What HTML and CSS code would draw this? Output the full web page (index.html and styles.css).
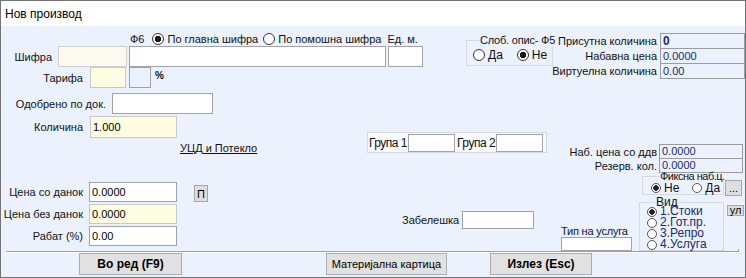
FILE: index.html
```html
<!DOCTYPE html>
<html lang="mk">
<head>
    <meta charset="UTF-8">
    <meta name="viewport" content="width=device-width, initial-scale=1.0">
    <title>Нов производ</title>
    <link rel="stylesheet" href="styles.css">
</head>
<body>
    <div class="window">
        <div class="titlebar">Нов производ</div>

        <div class="client">
            <div class="form">
                <div class="main">
                    <div class="top">
                        <div class="code-block">
                            <div class="search-row">
                                <span class="hotkey">Ф6</span>
                                <label class="opt"><input type="radio" name="search" class="radio" checked>По главна шифра</label>
                                <label class="opt"><input type="radio" name="search" class="radio">По помошна шифра</label>
                                <span class="unit-label">Ед. м.</span>
                            </div>
                            <div class="row">
                                <label class="lbl lbl-code">Шифра</label>
                                <input type="text" class="field code">
                                <input type="text" class="field name">
                                <input type="text" class="field unit">
                            </div>
                            <div class="row">
                                <label class="lbl lbl-tariff">Тарифа</label>
                                <input type="text" class="field yellow tariff">
                                <input type="text" class="field tariff-rate" disabled>
                                <span class="percent">%</span>
                            </div>
                        </div>

                        <fieldset class="group free-desc">
                            <legend>Слоб. опис- Ф5</legend>
                            <div class="opts">
                                <label class="opt"><input type="radio" name="free" class="radio">Да</label>
                                <label class="opt big"><input type="radio" name="free" class="radio" checked>Не</label>
                            </div>
                        </fieldset>
                    </div>

                    <div class="middle">
                        <div class="details">
                            <div class="row">
                                <label class="lbl lbl-approved">Одобрено по док.</label>
                                <input type="text" class="field approved">
                            </div>
                            <div class="row row-qty">
                                <label class="lbl lbl-qty">Количина</label>
                                <input type="text" class="field yellow qty" value="1.000">
                            </div>
                            <a href="#" class="trace-link">УЦД и Потекло</a>
                        </div>

                        <div class="groups">
                            <span>Група 1</span>
                            <input type="text" class="field group-input">
                            <span class="group2-label">Група 2</span>
                            <input type="text" class="field group-input second">
                        </div>
                    </div>

                    <div class="bottom">
                        <div class="prices">
                            <div class="row">
                                <label class="lbl lbl-price">Цена со данок</label>
                                <input type="text" class="field price" value="0.0000">
                            </div>
                            <div class="row">
                                <label class="lbl lbl-price">Цена без данок</label>
                                <input type="text" class="field yellow price" value="0.0000">
                            </div>
                            <div class="row">
                                <label class="lbl lbl-price">Рабат (%)</label>
                                <input type="text" class="field price" value="0.00">
                            </div>
                        </div>

                        <button class="mini-btn p-btn">П</button>

                        <div class="note">
                            <label>Забелешка</label>
                            <input type="text" class="field note-input">
                        </div>
                    </div>
                </div>

                <div class="side">
                    <div class="stock">
                        <div class="info-row">
                            <span>Присутна количина</span>
                            <div class="value strong">0</div>
                        </div>
                        <div class="info-row">
                            <span>Набавна цена</span>
                            <div class="value">0.0000</div>
                        </div>
                        <div class="info-row">
                            <span>Виртуелна количина</span>
                            <div class="value">0.00</div>
                        </div>
                    </div>

                    <div class="stock cost">
                        <div class="info-row">
                            <span>Наб. цена со ддв</span>
                            <div class="value">0.0000</div>
                        </div>
                        <div class="info-row">
                            <span>Резерв. кол.</span>
                            <div class="value">0.0000</div>
                        </div>
                    </div>

                    <div class="fixed-row">
                        <fieldset class="group fixed">
                            <legend>Фиксна наб.ц.</legend>
                            <div class="opts">
                                <label class="opt"><input type="radio" name="fixed" class="radio small" checked>Не</label>
                                <label class="opt"><input type="radio" name="fixed" class="radio small">Да</label>
                            </div>
                        </fieldset>
                        <button class="mini-btn dots">...</button>
                    </div>

                    <div class="kind-row">
                        <div class="service">
                            <label>Тип на услуга</label>
                            <input type="text" class="field service-input">
                        </div>
                        <fieldset class="group kind">
                            <legend>Вид</legend>
                            <div class="kind-list">
                                <label class="opt"><input type="radio" name="kind" class="radio small" checked>1.Стоки</label>
                                <label class="opt"><input type="radio" name="kind" class="radio small">2.Гот.пр.</label>
                                <label class="opt"><input type="radio" name="kind" class="radio small">3.Репро</label>
                                <label class="opt"><input type="radio" name="kind" class="radio small">4.Услуга</label>
                            </div>
                        </fieldset>
                        <button class="mini-btn ul-btn">ул</button>
                    </div>
                </div>
            </div>

            <div class="separator"></div>

            <div class="actions">
                <button class="btn btn-ok">Во ред (F9)</button>
                <button class="btn btn-card">Материјална картица</button>
                <button class="btn btn-exit">Излез (Esc)</button>
            </div>
        </div>
    </div>
</body>
</html>
```

FILE: styles.css
```css
* {
    box-sizing: border-box;
}

body {
    margin: 0;
    font-family: "Liberation Sans", Arial, sans-serif;
    font-size: 11px;
    color: #111;
    background: #fff;
}

.window {
    width: 746px;
    height: 278px;
    border: 1px solid #747474;
    display: flex;
    flex-direction: column;
}

.titlebar {
    height: 25px;
    line-height: 26px;
    padding-left: 4px;
    font-size: 12px;
    color: #000;
    background: #fff;
}

.client {
    flex: 1;
    display: flex;
    flex-direction: column;
    background: #ebf2fd;
}

.form {
    display: flex;
    height: 224px;
}

.main {
    flex: none;
    width: 556px;
    display: flex;
    flex-direction: column;
}

.side {
    flex: 1;
    min-width: 0;
    display: flex;
    flex-direction: column;
    padding-top: 7px;
}

/* rows, labels, inputs */

.row {
    display: flex;
    align-items: center;
    height: 21px;
}

.lbl {
    flex: none;
    text-align: right;
    white-space: nowrap;
}

.lbl-code { width: 51px; margin-right: 6px; }
.lbl-tariff { width: 82px; margin-right: 7px; }
.lbl-approved { width: 105px; margin-right: 6px; }
.lbl-qty { width: 82px; margin-right: 7px; }
.lbl-price { width: 82px; margin-right: 6px; }

.field {
    flex: none;
    height: 100%;
    margin: 0;
    padding: 0 2px;
    border: 1px solid #a3a3a3;
    background: #fff;
    font: inherit;
    color: #000;
    outline: none;
}

.field.yellow {
    background: #fffde1;
    border-color: #c9c9c9;
}

.field:disabled {
    background: #ebf2fd;
}

/* top block */

.top {
    display: flex;
    height: 62px;
}

.code-block {
    flex: none;
    width: 423px;
    padding-top: 6px;
}

.search-row {
    display: flex;
    align-items: center;
    height: 14px;
    padding-left: 129px;
    white-space: nowrap;
}

.hotkey {
    margin-right: 8px;
}

.opt {
    display: inline-flex;
    align-items: center;
    margin-right: 5px;
    white-space: nowrap;
}

.unit-label {
    margin-left: 1px;
}

.code {
    width: 69px;
    background: #fdf9ee;
    border-color: #cfcfcf;
}

.name { width: 257px; margin-left: 2px; }
.unit { width: 35px; margin-left: 2px; }
.tariff { width: 36px; }
.tariff-rate { width: 22px; margin-left: 3px; }

.percent {
    margin-left: 4px;
    font-size: 10px;
    font-weight: bold;
    margin-bottom: 4px;
}

/* radios */

.radio {
    -webkit-appearance: none;
    appearance: none;
    flex: none;
    width: 12px;
    height: 12px;
    margin: 0 3px 0 0;
    border: 1px solid #333;
    border-radius: 50%;
    background: #fff;
}

.radio:checked {
    background: radial-gradient(circle, #1a1a1a 0 3px, #fff 3.5px);
}

.radio.small {
    width: 10px;
    height: 10px;
    border-color: #555;
}

.radio.small:checked {
    background: radial-gradient(circle, #222 0 2.5px, #fff 3px);
}

/* group boxes */

.group {
    flex: none;
    margin: 0;
    padding: 0;
    min-width: 0;
    border: 1px solid #d5d9df;
}

.group legend {
    padding: 0 1px;
    line-height: 12px;
    white-space: nowrap;
}

.opts {
    display: flex;
    align-items: center;
}

.free-desc {
    align-self: flex-start;
    width: 87px;
    margin: 8px 0 0 42px;
    padding: 3px 0 4px 6px;
}

.free-desc legend {
    margin-left: 6px;
    font-size: 11px;
    letter-spacing: -0.2px;
}

.free-desc .opts {
    height: 12px;
    font-size: 12px;
}

.free-desc .opt {
    margin-right: 14px;
}

/* middle block */

.middle {
    display: flex;
    height: 72px;
}

.details {
    flex: none;
    width: 262px;
    padding-top: 5px;
}

.approved { width: 101px; }

.row-qty {
    height: 22px;
    margin-top: 2px;
}

.qty { width: 87px; }

.trace-link {
    display: block;
    margin: 4px 0 0 179px;
    line-height: 13px;
    color: #111;
    text-decoration: underline;
}

.groups {
    align-self: flex-start;
    display: flex;
    align-items: center;
    width: 180px;
    height: 21px;
    margin: 44px 0 0 104px;
    padding-left: 1px;
    background: #f8fafe;
    border: 1px solid #d3d8e0;
    font-size: 12px;
    letter-spacing: -0.5px;
    white-space: nowrap;
}

.group-input {
    width: 47px;
    height: 18px;
    margin-left: 1px;
}

.group2-label {
    margin-left: 2px;
}

/* bottom block */

.bottom {
    display: flex;
    flex: 1;
}

.prices {
    flex: none;
    display: flex;
    flex-direction: column;
    gap: 2px;
    padding-top: 22px;
}

.prices .row {
    height: 20px;
}

.price { width: 88px; }

.mini-btn {
    flex: none;
    padding: 0;
    border: 1px solid #a6a6a6;
    background: #dedede;
    font: inherit;
    color: #000;
}

.p-btn {
    align-self: flex-start;
    width: 14px;
    height: 17px;
    margin: 25px 0 0 17px;
}

.note {
    align-self: flex-start;
    display: flex;
    align-items: center;
    height: 18px;
    margin: 51px 0 0 194px;
}

.note-input {
    width: 72px;
    margin-left: 3px;
}

/* side column */

.info-row {
    display: flex;
    justify-content: flex-end;
    align-items: center;
    height: 16px;
    white-space: nowrap;
}

.info-row + .info-row {
    margin-top: -1px;
}

.value {
    flex: none;
    width: 85px;
    height: 100%;
    margin-left: 3px;
    padding-left: 2px;
    border: 1px solid #9c9c9c;
    line-height: 14px;
    color: #1b2a72;
    text-align: left;
}

.value.strong {
    font-weight: bold;
    font-size: 12px;
}

.cost {
    margin: 65px 2px 0 0;
}

.cost .info-row {
    height: 15px;
}

.cost .value {
    width: 84px;
    margin-left: 2px;
    line-height: 13px;
}

.fixed-row {
    display: flex;
    align-items: flex-start;
    margin-top: -3px;
    padding-left: 85px;
}

.fixed {
    width: 82px;
    padding: 0 0 1px 8px;
}

.fixed legend {
    margin-left: 8px;
    letter-spacing: -0.5px;
}

.fixed .opts {
    height: 11px;
    font-size: 12px;
}

.fixed .opt {
    margin-right: 13px;
}

.dots {
    width: 17px;
    height: 16px;
    margin: 10px 0 0 1px;
    line-height: 10px;
}

.kind-row {
    display: flex;
    align-items: flex-start;
}

.service {
    flex: none;
    display: flex;
    flex-direction: column;
    width: 72px;
    margin-left: 4px;
    padding-top: 30px;
    letter-spacing: -0.2px;
    color: #0c1540;
}

.service label {
    line-height: 11px;
    white-space: nowrap;
}

.service-input {
    height: 14px;
    width: 71px;
}

.kind {
    width: 85px;
    margin-left: 6px;
    padding: 0 0 0 7px;
}

.kind legend {
    margin-left: 8px;
    font-size: 12px;
}

.kind-list {
    display: flex;
    flex-direction: column;
    margin-top: -2px;
    font-size: 12px;
    line-height: 11px;
    color: #1b2a72;
}

.kind-list .opt {
    height: 11px;
}

.ul-btn {
    width: 17px;
    height: 11px;
    margin: 9px 0 0 3px;
    line-height: 9px;
}

/* bottom bar */

.separator {
    height: 3px;
    margin: -1px 6px 0 5px;
    border-bottom: 1px solid #a0a0a0;
    border-right: 1px solid #a0a0a0;
    box-shadow: 0 1px 0 #fff;
}

.actions {
    display: flex;
    padding: 1px 0 0 78px;
}

.btn {
    height: 22px;
    padding: 0;
    border: 1px solid #adadad;
    background: #e1e1e1;
    font: inherit;
    color: #000;
}

.btn-ok {
    width: 103px;
    font-size: 12px;
    font-weight: bold;
}

.btn-card {
    width: 121px;
    margin-left: 144px;
}

.btn-exit {
    width: 102px;
    margin-left: 43px;
    font-size: 12px;
    font-weight: bold;
}
```
